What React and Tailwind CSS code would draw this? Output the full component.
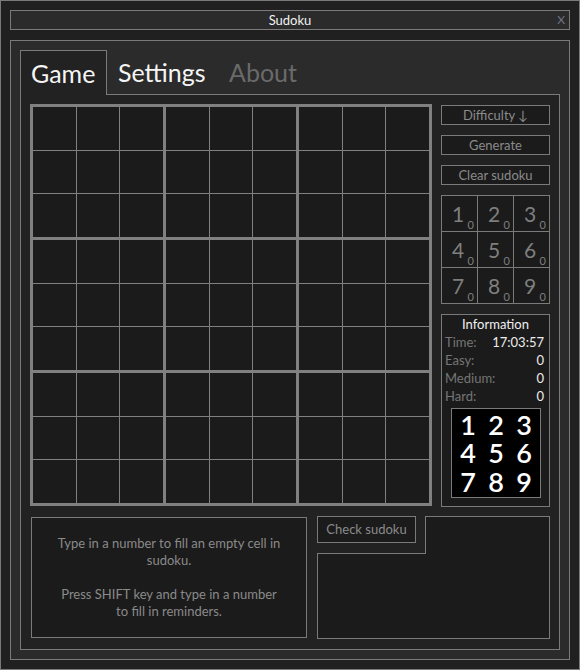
import React from "react";

const cells = Array.from({ length: 9 });

function Board() {
  return (
    <div className="w-[402px] h-[402px] border-[3px] border-[#808080] bg-[#808080] grid grid-cols-3 grid-rows-3 gap-[3px] shrink-0">
      {cells.map((_, b) => (
        <div key={b} className="grid grid-cols-3 grid-rows-3 gap-px">
          {cells.map((_, c) => (
            <div key={c} className="bg-[#1b1b1b]" />
          ))}
        </div>
      ))}
    </div>
  );
}

function Btn({ children }) {
  return (
    <div className="h-[20px] border border-[#7a7a7a] bg-[#1b1b1b] flex items-center justify-center text-[13px] leading-none text-[#8a8a8a]">
      {children}
    </div>
  );
}

function NumPad() {
  return (
    <div className="w-[109px] h-[109px] border border-[#7a7a7a] bg-[#7a7a7a] grid grid-cols-3 grid-rows-3 gap-px">
      {[1, 2, 3, 4, 5, 6, 7, 8, 9].map((n) => (
        <div key={n} className="relative bg-[#1b1b1b] flex items-center justify-center">
          <span className="text-[21px] leading-none text-[#7f7f7f] mr-[3px]">{n}</span>
          <span className="absolute right-[3px] bottom-[1px] text-[11px] leading-none text-[#7f7f7f]">0</span>
        </div>
      ))}
    </div>
  );
}

function Info() {
  const rows = [
    ["Time:", "17:03:57"],
    ["Easy:", "0"],
    ["Medium:", "0"],
    ["Hard:", "0"],
  ];
  return (
    <div className="h-[193px] border border-[#7a7a7a] bg-[#1b1b1b] flex flex-col text-[13px] leading-[18px]">
      <div className="text-center text-[#f0f0f0]">Information</div>
      {rows.map(([l, v]) => (
        <div key={l} className="flex justify-between pl-[3px] pr-[5px]">
          <span className="text-[#767676]">{l}</span>
          <span className="text-[#ececec]">{v}</span>
        </div>
      ))}
      <div className="mt-[3px] ml-[9px] w-[90px] h-[90px] border border-[#7a7a7a] bg-black grid grid-cols-3 grid-rows-3 text-white text-[27px] leading-[27px] font-semibold px-[2px] py-[1px]">
        {[1, 2, 3, 4, 5, 6, 7, 8, 9].map((n) => (
          <div key={n} className="flex items-center justify-center">{n}</div>
        ))}
      </div>
    </div>
  );
}

export default function App() {
  return (
    <div className="w-[580px] h-[670px] border border-[#7a7a7a] bg-[#202020] px-[9px] pt-[9px] font-['Lato','Noto_Sans',sans-serif] flex flex-col">
      <div className="relative h-[20px] shrink-0 border border-[#7a7a7a] bg-[#2b2b2b] flex items-center justify-center text-[13px] leading-none text-[#f2f2f2]">
        Sudoku
        <span className="absolute right-[4px] top-[3px] text-[12px] leading-none text-[#6f7686]">X</span>
      </div>
      <div className="mt-[10px] h-[620px] shrink-0 border border-[#7a7a7a] bg-[#2b2b2b] p-[9px] flex flex-col">
        <div className="h-[44px] shrink-0 flex text-[25px] leading-none">
          <div className="relative z-10 w-[87px] h-[45px] border border-b-0 border-[#7a7a7a] bg-[#222222] pl-[10px] flex items-center text-[#f5f5f5]">
            Game
          </div>
          <div className="w-[111px] pl-[11px] flex items-center text-[#f5f5f5]">Settings</div>
          <div className="pl-[11px] flex items-center text-[#6a6a6a]">About</div>
        </div>
        <div className="flex-1 border border-[#7a7a7a] bg-[#222222] p-[9px] flex flex-col">
          <div className="flex gap-[9px]">
            <Board />
            <div className="w-[109px] mt-px flex flex-col gap-[10px]">
              <Btn>Difficulty ↓</Btn>
              <Btn>Generate</Btn>
              <Btn>Clear sudoku</Btn>
              <NumPad />
              <Info />
            </div>
          </div>
          <div className="mt-[9px] h-[124px] flex gap-[10px]">
            <div className="ml-px mt-px w-[276px] h-[121px] border border-[#7a7a7a] bg-[#1b1b1b] flex items-center justify-center text-center text-[13px] leading-[17px] text-[#8a8a8a]">
              <p>
                Type in a number to fill an empty cell in
                <br />
                sudoku.
                <br />
                <br />
                Press SHIFT key and type in a number
                <br />
                to fill in reminders.
              </p>
            </div>
            <div className="w-[233px] h-[123px] flex flex-col">
              <div className="h-[37px] flex shrink-0">
                <div className="w-[99px] h-[27px] border border-[#7a7a7a] bg-[#1b1b1b] flex items-center justify-center text-[13px] leading-none text-[#8a8a8a]">
                  Check sudoku
                </div>
                <div className="relative z-10 ml-[9px] flex-1 h-[38px] border border-b-0 border-[#7a7a7a] bg-[#1b1b1b]" />
              </div>
              <div className="flex-1 border border-[#7a7a7a] bg-[#1b1b1b]" />
            </div>
          </div>
        </div>
      </div>
    </div>
  );
}
